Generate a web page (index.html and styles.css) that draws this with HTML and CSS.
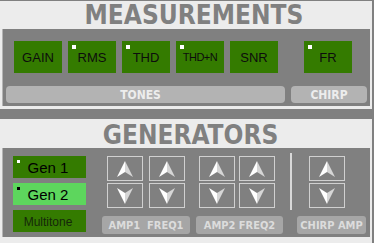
FILE: index.html
```html
<!DOCTYPE html>
<html lang="en">
<head>
  <meta charset="UTF-8">
  <title>Analyzer</title>
  <link rel="stylesheet" href="styles.css">
</head>
<body>

  <svg class="defs" width="0" height="0">
    <symbol id="up" viewBox="0 0 16 16">
      <path d="M8 0L8 11L0 16Z" fill="#fff"/>
      <path d="M8 0L16 16L8 11Z" fill="#d6d6d6"/>
    </symbol>
    <symbol id="down" viewBox="0 0 16 16">
      <path d="M0 0L8 5L8 16Z" fill="#fff"/>
      <path d="M16 0L8 5L8 16Z" fill="#d6d6d6"/>
    </symbol>
  </svg>

  <div class="app">

    <div class="sect sect-meas">
      <h1 class="title">MEASUREMENTS</h1>
      <div class="panel meas-panel">
        <div class="meas-row">
          <div class="mbtn">GAIN</div>
          <div class="mbtn on">RMS</div>
          <div class="mbtn on">THD</div>
          <div class="mbtn on small">THD+N</div>
          <div class="mbtn">SNR</div>
          <div class="mbtn on fr">FR</div>
        </div>
        <div class="bar-row">
          <div class="bar tones">TONES</div>
          <div class="bar chirp">CHIRP</div>
        </div>
      </div>
    </div>

    <div class="sect sect-gen">
      <h1 class="title">GENERATORS</h1>
      <div class="panel gen-panel">
        <div class="gens">
          <div class="gbtn on">Gen 1</div>
          <div class="gbtn on sel">Gen 2</div>
          <div class="gbtn multi">Multitone</div>
        </div>

        <div class="group g1">
          <div class="arrows">
            <div class="col">
              <div class="abtn"><svg width="16" height="16"><use href="#up"/></svg></div>
              <div class="abtn"><svg width="16" height="16"><use href="#down"/></svg></div>
            </div>
            <div class="col">
              <div class="abtn"><svg width="16" height="16"><use href="#up"/></svg></div>
              <div class="abtn"><svg width="16" height="16"><use href="#down"/></svg></div>
            </div>
          </div>
          <div class="lbl">AMP1&nbsp;&nbsp;FREQ1</div>
        </div>

        <div class="group g2">
          <div class="arrows">
            <div class="col">
              <div class="abtn"><svg width="16" height="16"><use href="#up"/></svg></div>
              <div class="abtn"><svg width="16" height="16"><use href="#down"/></svg></div>
            </div>
            <div class="col">
              <div class="abtn"><svg width="16" height="16"><use href="#up"/></svg></div>
              <div class="abtn"><svg width="16" height="16"><use href="#down"/></svg></div>
            </div>
          </div>
          <div class="lbl">AMP2 FREQ2</div>
        </div>

        <div class="sep"></div>

        <div class="group g3">
          <div class="arrows">
            <div class="col">
              <div class="abtn"><svg width="16" height="16"><use href="#up"/></svg></div>
              <div class="abtn"><svg width="16" height="16"><use href="#down"/></svg></div>
            </div>
          </div>
          <div class="lbl">CHIRP AMP</div>
        </div>
      </div>
    </div>

  </div>

</body>
</html>
```
FILE: styles.css
```css
body{
  margin:0;
  background:#808080;
  font-family:"Liberation Sans", Arial, sans-serif;
}
.defs{
  position:absolute;
  width:0;
  height:0;
}
.app{
  width:374px;
  height:243px;
  padding-top:1px;
  box-sizing:border-box;
  overflow:hidden;
}
.sect{
  width:372px;
  background:#ececec;
}
.sect-meas{
  padding-bottom:3px;
}
.sect-gen{
  margin-top:10px;
  height:124px;
}
.title{
  margin:0;
  font-family:"DejaVu Sans Condensed", "DejaVu Sans", sans-serif;
  font-stretch:condensed;
  font-weight:bold;
  font-size:26px;
  line-height:28px;
  color:#808080;
  text-align:center;
  padding-left:16px;
}
.sect-gen .title{
  padding-top:3px;
  line-height:26px;
  padding-left:9px;
}
.panel{
  margin-left:2px;
  width:368px;
  box-sizing:border-box;
  border-left:1px solid #b4b4b4;
  background:#808080;
}

/* measurements */
.meas-panel{
  height:77px;
  padding-top:12px;
}
.meas-row{
  display:flex;
  gap:6px;
  padding-left:11px;
}
.mbtn{
  position:relative;
  width:48px;
  height:32px;
  background:#347b00;
  display:flex;
  align-items:center;
  justify-content:center;
  font-size:13px;
  color:#0d0d0d;
}
.mbtn.small{
  font-size:11px;
  letter-spacing:-0.5px;
}
.mbtn.fr{
  margin-left:20px;
}
.mbtn.on::before{
  content:"";
  position:absolute;
  left:4px;
  top:4px;
  width:4px;
  height:4px;
  background:#fff;
}
.bar-row{
  display:flex;
  gap:6px;
  margin-top:13px;
  padding-left:3px;
}
.bar{
  height:17px;
  border-radius:4px;
  background:#b3b3b3;
  color:#ededed;
  font-family:"DejaVu Sans Condensed", "DejaVu Sans", sans-serif;
  font-stretch:condensed;
  font-weight:bold;
  font-size:12px;
  display:flex;
  align-items:center;
  justify-content:center;
  box-sizing:border-box;
}
.bar.tones{
  width:279px;
  padding-right:10px;
}
.bar.chirp{
  width:76px;
}

/* generators */
.gen-panel{
  height:89px;
  display:flex;
  align-items:flex-start;
  padding:8px 0 0 10px;
}
.gens{
  display:flex;
  flex-direction:column;
  gap:5px;
  width:73px;
}
.gbtn{
  position:relative;
  height:22px;
  background:#347b00;
  display:flex;
  align-items:center;
  justify-content:center;
  padding:1px 3px 0 0;
  box-sizing:border-box;
  font-size:15px;
  color:#000;
}
.gbtn.sel{
  background:#5dd65d;
}
.gbtn.on::before{
  content:"";
  position:absolute;
  left:4px;
  top:4px;
  width:3px;
  height:3px;
  background:#fff;
}
.gbtn.sel::before{
  background:#000;
}
.gbtn.multi{
  font-size:12px;
  color:#14280a;
}
.group{
  display:flex;
  flex-direction:column;
}
.arrows{
  display:flex;
}
.col{
  display:flex;
  flex-direction:column;
  gap:2px;
}
.abtn{
  width:36px;
  height:25px;
  border:1px solid #d0d0d0;
  box-sizing:border-box;
  display:flex;
  align-items:center;
  justify-content:center;
}
.lbl{
  margin-top:8px;
  height:18px;
  border-radius:3px;
  background:#a6a6a6;
  color:#dcdcdc;
  font-family:"DejaVu Sans Condensed", "DejaVu Sans", sans-serif;
  font-stretch:condensed;
  font-weight:bold;
  font-size:11px;
  display:flex;
  align-items:center;
  justify-content:center;
  white-space:nowrap;
}
.g1{
  margin-left:16px;
  width:88px;
}
.g1 .arrows{
  margin-left:5px;
  gap:6px;
}
.g2{
  margin-left:6px;
  width:87px;
}
.g2 .arrows{
  margin-left:3px;
  gap:4px;
}
.sep{
  margin:-3px 0 0 7px;
  width:2px;
  height:57px;
  background:#d8d8d8;
}
.g3{
  margin-left:5px;
  width:69px;
}
.g3 .arrows{
  margin-left:12px;
}
```
